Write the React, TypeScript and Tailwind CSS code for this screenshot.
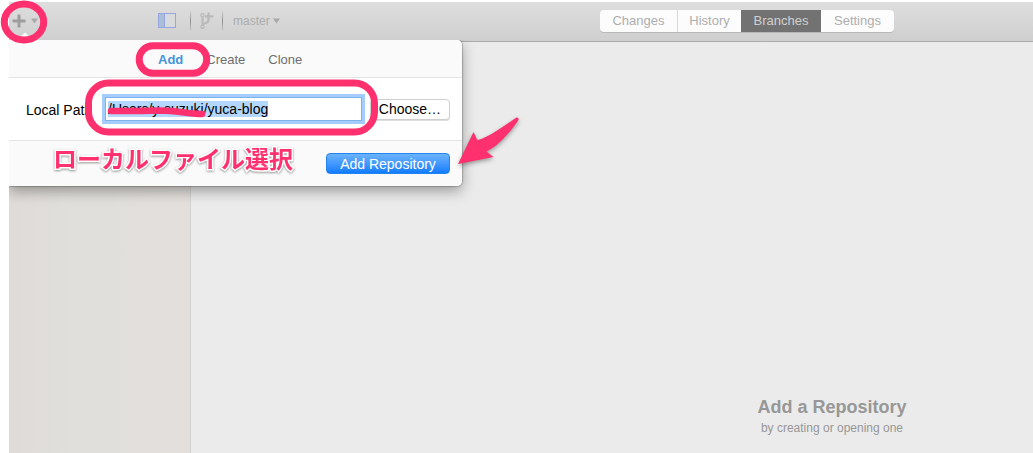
import { useEffect, useRef } from "react";

const views = [
  { name: "Changes", width: "w-[78px]" },
  { name: "History", width: "w-[63px]" },
  { name: "Branches", width: "w-[80px]" },
  { name: "Settings", width: "w-[73px]" },
];

function Caret() {
  return (
    <svg width="7" height="6" viewBox="0 0 7 6" aria-hidden="true">
      <path d="M0 0.5h7L3.5 5.5z" fill="#a9a9a9" />
    </svg>
  );
}

function Divider() {
  return <span className="h-5 w-px bg-linear-to-b from-[#d0d0d0] via-[#8e8e8e] to-[#c8c8c8]" />;
}

function Toolbar() {
  return (
    <header className="flex h-10 shrink-0 items-center border-b border-[#acacac] bg-linear-to-b from-[#dedede] to-[#cfcfcf] pb-[2px] pl-[3px] text-[#acacac]">
      <button type="button" aria-label="Add repository" className="flex w-[26px] items-center justify-between">
        <svg width="14" height="14" viewBox="0 0 14 14" aria-hidden="true">
          <path d="M7 0.5v13M0.5 7h13" stroke="#9d9d9d" strokeWidth="3" />
        </svg>
        <Caret />
      </button>
      <button type="button" aria-label="Toggle sidebar" className="ml-[120px]">
        <svg width="18" height="16" viewBox="0 0 18 16" aria-hidden="true">
          <rect x="0.5" y="0.5" width="17" height="14" fill="#d9dade" stroke="#98a5e2" />
          <path d="M1 1h5v13H1z" fill="#a9bfd5" />
          <path d="M6.5 1v13" stroke="#98a5e2" />
        </svg>
      </button>
      <div className="ml-[14px] flex items-center">
        <Divider />
        <button type="button" aria-label="New branch" className="mr-2 ml-[9px]">
          <svg width="14" height="18" viewBox="0 0 14 18" fill="none" stroke="#bababa" aria-hidden="true">
            <circle cx="2.5" cy="3.2" r="1.6" strokeWidth="1.3" />
            <circle cx="2.5" cy="14.8" r="1.6" strokeWidth="1.3" />
            <path d="M2.5 5v8M2.5 12.500C4 10.500 8.500 12 8.500 8V0.500M5 4.300h8.500" strokeWidth="2.2" />
          </svg>
        </button>
        <Divider />
      </div>
      <button type="button" className="ml-[10px] flex items-center gap-[3px] text-[12px] leading-4">
        master <Caret />
      </button>
      <nav aria-label="Views" className="mr-[139px] ml-auto flex h-[22px] overflow-hidden rounded-[4px] bg-[#fcfcfc] text-[13px] shadow-[0_1px_0_#b8b8b8]">
        {views.map(({ name, width }) => (
          <button
            key={name}
            type="button"
            className={`${width} ${
              name === "Branches"
                ? "bg-[#727272] text-[#d0d0d0]"
                : name === "Changes"
                  ? "border-r border-[#d8d8d8] text-[#aeaeae]"
                  : "text-[#aeaeae]"
            }`}
          >
            {name}
          </button>
        ))}
      </nav>
    </header>
  );
}

function AddPopover() {
  const path = useRef<HTMLInputElement>(null);
  useEffect(() => {
    path.current?.focus();
    path.current?.select();
  }, []);

  return (
    <section className="absolute top-10 left-[9px] w-[453px] rounded-r-[5px] bg-white text-[14px] text-black shadow-[0_5px_14px_rgba(0,0,0,0.35),0_0_1px_1px_rgba(0,0,0,0.2)] [clip-path:inset(0_-30px_-30px_0)]">
      <div role="tablist" className="flex h-[38px] items-center gap-[23px] rounded-tr-[5px] border-b border-[#e4e4e4] bg-[#fafafa] pt-[2px] pl-[149px] text-[13px] text-[#6e6e6e]">
        <button type="button" role="tab" aria-selected="true" className="font-bold text-[#4595db]">Add</button>
        <button type="button" role="tab" aria-selected="false">Create</button>
        <button type="button" role="tab" aria-selected="false">Clone</button>
      </div>
      <div className="flex h-[62px] items-center pr-3 pl-[17px]">
        <label htmlFor="local-path" className="w-[79px] pt-[2px]">Local Path</label>
        <input
          id="local-path"
          ref={path}
          defaultValue="/Users/y-suzuki/yuca-blog"
          className="h-6 w-[257px] bg-white px-[3px] outline-3 outline-[#a4cdfd] ring-1 ring-[#7eb2ea] ring-inset selection:bg-[#b3d7ff] selection:text-black"
        />
        <button type="button" className="ml-auto h-[21px] w-20 rounded-[4px] border border-[#cfcfcf] bg-white leading-4 shadow-[0_1px_0_#dedede]">
          Choose…
        </button>
      </div>
      <div className="flex h-[46px] items-center justify-end rounded-br-[5px] border-t border-[#e4e4e4] bg-[#fafafa] pr-3">
        <button type="button" className="h-[21px] w-[124px] rounded-[4px] border border-[#2583f0] bg-linear-to-b from-[#6bb3fa] to-[#0c7cff] leading-4 text-white">
          Add Repository
        </button>
      </div>
    </section>
  );
}

function Annotations() {
  return (
    <div className="pointer-events-none absolute top-0 left-0">
      <svg width="530" height="190" viewBox="0 0 530 190" fill="none" stroke="#ff306e" strokeWidth="7" aria-hidden="true">
        <path d="M20.500 37l4.500-4.500 4.500 4.500z" fill="#fff" stroke="none" />
        <ellipse cx="24" cy="22" rx="19.700" ry="18" />
        <rect x="139.200" y="45.700" width="67.500" height="27.500" rx="13.700" />
        <rect x="88.500" y="83" width="286" height="49" rx="20" />
        <path d="M111 111C126 111 144 111 161 110.500C177 110.500 187 114 202 114" strokeWidth="6.500" strokeLinecap="round" />
        <path
          d="M458 164L473.500 132L477.500 140.300C491 136 502 127 516.500 117.500Q519 117 518.500 120C510 132 499 146 486.500 151.500L493.500 157Z"
          fill="#ff306e"
          stroke="none"
          className="drop-shadow-[0_2px_2px_rgba(0,0,0,0.35)]"
        />
      </svg>
      <p className="absolute top-[143px] left-[53px] text-[24px] leading-[30px] font-bold whitespace-nowrap text-[#ff306e] drop-shadow-[0_1px_1px_rgba(0,0,0,0.4)] [-webkit-text-stroke:3px_white] [font-family:'Noto_Sans_CJK_JP',sans-serif] [paint-order:stroke_fill]">
        ローカルファイル選択
      </p>
    </div>
  );
}

export default function App() {
  return (
    <div className="relative flex min-h-screen flex-col bg-white pt-[2px] pl-[9px] [font-family:'Liberation_Sans',Arial,sans-serif]">
      <Toolbar />
      <div className="flex grow">
        <aside className="w-[182px] shrink-0 border-r border-[#d3d3d3] bg-linear-to-r from-[#dfdbd8] via-[#e0dfdb] via-35% to-[#e3dfdc]" />
        <main className="flex grow items-end justify-center bg-[#ebebeb] pb-4 pl-[440px] text-center text-[#979797]">
          <div>
            <h1 className="text-[18px] leading-6 font-bold">Add a Repository</h1>
            <p className="text-[12px] leading-[18px]">by creating or opening one</p>
          </div>
        </main>
      </div>
      <AddPopover />
      <Annotations />
    </div>
  );
}
